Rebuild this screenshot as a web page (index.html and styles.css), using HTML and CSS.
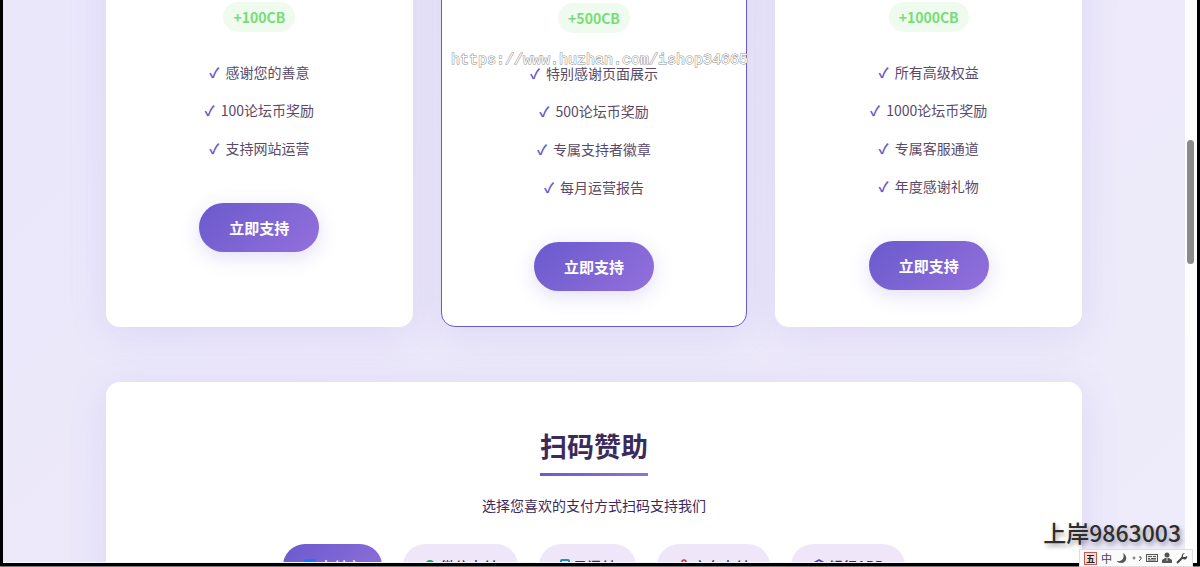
FILE: index.html
```html
<!DOCTYPE html>
<html lang="zh-CN">
<head>
<meta charset="utf-8">
<title>扫码赞助</title>
<link rel="stylesheet" href="styles.css">
</head>
<body>
<div class="screen">
  <main class="page">
    <div class="container">
      <section class="plans">
        <article class="plan">
          <span class="bonus">+100CB</span>
          <ul class="features">
            <li>感谢您的善意</li>
            <li>100论坛币奖励</li>
            <li>支持网站运营</li>
          </ul>
          <button class="support" type="button">立即支持</button>
        </article>
        <article class="plan plan-featured">
          <span class="bonus">+500CB</span>
          <ul class="features">
            <li>特别感谢页面展示</li>
            <li>500论坛币奖励</li>
            <li>专属支持者徽章</li>
            <li>每月运营报告</li>
          </ul>
          <button class="support" type="button">立即支持</button>
        </article>
        <article class="plan">
          <span class="bonus">+1000CB</span>
          <ul class="features">
            <li>所有高级权益</li>
            <li>1000论坛币奖励</li>
            <li>专属客服通道</li>
            <li>年度感谢礼物</li>
          </ul>
          <button class="support" type="button">立即支持</button>
        </article>
      </section>

      <section class="scan">
        <h2 class="scan-title">扫码赞助</h2>
        <p class="scan-text">选择您喜欢的支付方式扫码支持我们</p>
        <div class="methods">
          <button class="method method-active" type="button">
            <svg width="12" height="14" viewBox="0 0 12 14" aria-hidden="true"><rect width="12" height="13" rx="2" fill="#1677ff"/><path d="M3 6h6M6 4v4M3 11c2 1 4-1 5-3" stroke="#fff" fill="none"/></svg>支付宝</button>
          <button class="method" type="button">
            <svg width="14" height="14" viewBox="0 0 14 14" aria-hidden="true"><ellipse cx="6" cy="6" rx="5" ry="5" fill="#12b05a"/><circle cx="4" cy="4" r="1" fill="#efe7f9"/><circle cx="8" cy="4" r="1" fill="#efe7f9"/><ellipse cx="10" cy="10" rx="4" ry="3" fill="#12b05a"/></svg>微信支付</button>
          <button class="method" type="button">
            <svg width="10" height="14" viewBox="0 0 10 14" aria-hidden="true"><rect x="1" y="1" width="8" height="12" rx="1" fill="none" stroke="#1790d0" stroke-width="2"/><path d="M4 11h2" stroke="#1790d0"/></svg>云闪付</button>
          <button class="method" type="button">
            <svg width="12" height="14" viewBox="0 0 12 14" aria-hidden="true"><path d="M4 6V3a2 2 0 0 1 4 0v3" fill="none" stroke="#d92b36" stroke-width="1.500"/><rect x="1" y="5" width="10" height="8" rx="1" fill="#d92b36"/></svg>京东支付</button>
          <button class="method" type="button">
            <svg width="14" height="14" viewBox="0 0 14 14" aria-hidden="true"><path d="M7 0L14 4V6H0V4zM2 6h2v5H2zm4 0h2v5H6zm4 0h2v5h-2zM0 11h14v2H0z" fill="#5546c0"/><circle cx="7" cy="3" r="1" fill="#efe7f9"/></svg>银行APP</button>
        </div>
      </section>
    </div>
  </main>
  <div class="scrollbar"><div class="thumb"></div></div>
</div>

<div class="site-mark">https://www.huzhan.com/ishop34665</div>
<div class="corner-mark">上岸9863003</div>
<div class="ime">
  <span class="ime-wubi">五</span>
  <span class="ime-lang">中</span>
  <svg width="12" height="12" viewBox="0 0 12 12" aria-hidden="true"><path d="M7 1c5 3 4 9-1 10-3 0-5-1-5-2 5 1 8-3 6-8z" fill="#555"/></svg>
  <svg width="10" height="12" viewBox="0 0 10 12" aria-hidden="true"><circle cx="2" cy="6" r="1" fill="none" stroke="#666"/><path d="M7 5h2v2L7 9" fill="none" stroke="#555"/></svg>
  <svg width="12" height="12" viewBox="0 0 12 12" aria-hidden="true"><rect x=".5" y="2.500" width="11" height="7" fill="#eee" stroke="#555"/><path d="M2 4.500h4M7 4.500h3M2 6.500h2M5 6.500h5M2 8h8" stroke="#555"/></svg>
  <svg width="10" height="12" viewBox="0 0 10 12" aria-hidden="true"><circle cx="5" cy="3" r="2.500" fill="#555"/><path d="M3 6h4l3 2v3H0V8z" fill="#555"/><path d="M5 6v3" stroke="#ddd"/></svg>
  <svg width="12" height="12" viewBox="0 0 12 12" aria-hidden="true"><path d="M1 11L7 5" stroke="#444" stroke-width="2"/><path d="M9 1L7 3v2h2l2-1c1 3-2 4-4 3S5 1 9 1z" fill="#444"/></svg>
</div>
</body>
</html>
```
FILE: styles.css
```css
* {
  box-sizing: border-box;
}

body {
  margin: 0;
  background: #777b78;
  color: #3b2a5c;
  font-family: "Noto Sans CJK SC", sans-serif;
  font-size: 14px;
  overflow: hidden;
}

button {
  border: 0;
  font-family: inherit;
}

.screen {
  display: flex;
  height: calc(100vh - 1px);
  border: solid #000;
  border-width: 0 3px 3px;
  overflow: hidden;
}

.page {
  flex: 1;
  min-width: 0;
  overflow: hidden;
  border-bottom: 1px solid #f7f6fd;
  background: linear-gradient(135deg, #ebe7fb, #eeebfa);
}

.container {
  max-width: 976px;
  margin: -59px auto 0;
}

.plans {
  display: grid;
  grid-template-columns: repeat(3, 1fr);
  gap: 28px;
}

.plan {
  display: flex;
  flex-direction: column;
  align-items: center;
  padding: 61px 20px 36px;
  border-radius: 14px;
  background: #fff;
  box-shadow: 0 7px 40px rgba(106, 90, 205, 0.12);
}

.plan-featured {
  border: 1px solid #6a5acd;
  padding-bottom: 35px;
}

.bonus {
  padding: 0 10px;
  border-radius: 15px;
  background: #eefbee;
  color: #77dd77;
  font-size: 14px;
  font-weight: 700;
  line-height: 30px;
}

.features {
  margin: 21px 0 36px;
  padding: 0;
  list-style: none;
  text-align: center;
  color: #5a4a6a;
  line-height: 38px;
}

.features li::before {
  content: "✓";
  margin-right: 6px;
  color: #6a5acd;
  font-weight: 700;
}

.support {
  padding: 0 30px;
  border-radius: 25px;
  background: linear-gradient(135deg, #6a5acd, #9370db);
  box-shadow: 0 5px 20px rgba(106, 90, 205, 0.2);
  color: #fff;
  font-size: 15px;
  font-weight: 700;
  line-height: 49px;
}

.scan {
  display: flex;
  flex-direction: column;
  align-items: center;
  margin-top: 55px;
  padding: 44px 20px 60px;
  border-radius: 14px;
  background: #fff;
  box-shadow: 0 7px 40px rgba(106, 90, 205, 0.12);
}

.scan-title {
  margin: 0;
  padding-bottom: 7px;
  border-bottom: 3px solid;
  border-image: linear-gradient(90deg, #6a5acd, #9370db) 1;
  font-size: 27px;
  line-height: 40px;
}

.scan-text {
  margin: 18px 0 28px;
  line-height: 22px;
}

.methods {
  display: flex;
  gap: 21px;
}

.method {
  display: flex;
  align-items: center;
  gap: 3px;
  padding: 0 21px;
  border-radius: 25px;
  background: #efe7f9;
  color: #3b2a5c;
  font-size: 14px;
  font-weight: 500;
  line-height: 44px;
  white-space: nowrap;
}

.method-active {
  background: linear-gradient(135deg, #6a5acd, #9370db);
  color: #fff;
}

.scrollbar {
  width: 12px;
  padding: 140px 2px 0;
  background: #fdfdfd;
}

.thumb {
  width: 7px;
  height: 124px;
  border-radius: 4px;
  background: #8b8b8b;
}

.site-mark {
  position: absolute;
  top: 51px;
  left: 451px;
  color: #fff;
  font-family: "Liberation Mono", monospace;
  font-size: 15px;
  line-height: 20px;
  -webkit-text-stroke: 1px #8c8c8c;
  paint-order: stroke;
}

.corner-mark {
  position: absolute;
  right: 19px;
  bottom: 18px;
  color: #2e2e30;
  font-size: 23px;
  font-weight: 500;
  line-height: 34px;
  text-shadow: 2px 3px 4px rgba(0, 0, 0, 0.35);
}

.ime {
  position: absolute;
  right: 7px;
  bottom: 0;
  display: flex;
  align-items: center;
  gap: 4px;
  height: 18px;
  padding: 0 4px;
  border: 1px solid #ddd;
  background: #fafafa;
  color: #444;
}

.ime-wubi {
  width: 13px;
  border: 1px solid #c65a50;
  background: #f8dedb;
  color: #222;
  font-size: 9px;
  font-weight: 700;
  line-height: 11px;
  text-align: center;
}

.ime-lang {
  font-size: 11px;
  line-height: 14px;
}
```
